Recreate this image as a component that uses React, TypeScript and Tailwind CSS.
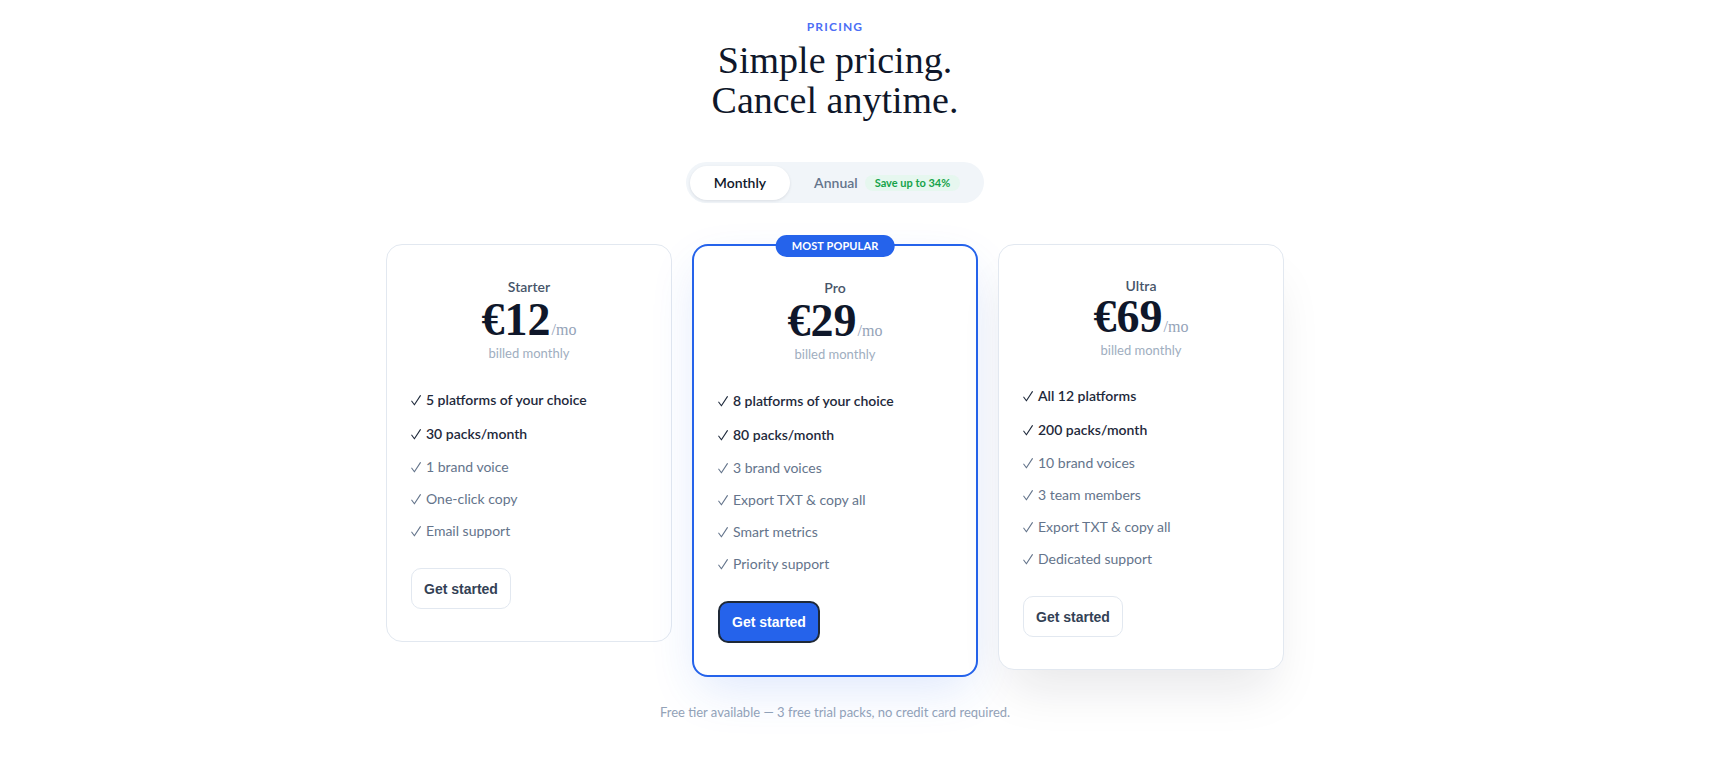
type Feature = { text: string; strong?: boolean };

interface Plan {
  name: string;
  price: string;
  features: Feature[];
  popular?: boolean;
}

const plans: Plan[] = [
  {
    name: 'Starter',
    price: '€12',
    features: [
      { text: '5 platforms of your choice', strong: true },
      { text: '30 packs/month', strong: true },
      { text: '1 brand voice' },
      { text: 'One-click copy' },
      { text: 'Email support' },
    ],
  },
  {
    name: 'Pro',
    price: '€29',
    popular: true,
    features: [
      { text: '8 platforms of your choice', strong: true },
      { text: '80 packs/month', strong: true },
      { text: '3 brand voices' },
      { text: 'Export TXT & copy all' },
      { text: 'Smart metrics' },
      { text: 'Priority support' },
    ],
  },
  {
    name: 'Ultra',
    price: '€69',
    features: [
      { text: 'All 12 platforms', strong: true },
      { text: '200 packs/month', strong: true },
      { text: '10 brand voices' },
      { text: '3 team members' },
      { text: 'Export TXT & copy all' },
      { text: 'Dedicated support' },
    ],
  },
];

function Check() {
  return (
    <svg viewBox="0 0 10 11" className="mr-[5px] inline-block h-[11px] w-[10px] align-[-1px]" fill="none">
      <path d="M0.8 6.2 L3.4 9.8 L9.4 0.6" stroke="currentColor" strokeWidth="1.1" strokeLinecap="round" strokeLinejoin="round" />
    </svg>
  );
}

function PlanCard({ plan }: { plan: Plan }) {
  const isUltra = plan.name === 'Ultra';
  const cardClass = plan.popular
    ? 'relative w-[286px] rounded-2xl border-2 border-[#2563eb] bg-white px-6 pt-8 pb-8 shadow-[0_18px_50px_-8px_rgba(37,99,235,0.16)]'
    : isUltra
      ? 'relative w-[286px] rounded-2xl border border-[#e2e8f0] bg-white px-6 pt-8 pb-8 shadow-[0_30px_50px_-12px_rgba(15,23,42,0.10)]'
      : 'relative w-[286px] rounded-2xl border border-[#e2e8f0] bg-white px-6 pt-8 pb-8';

  return (
    <div className={cardClass}>
      {plan.popular && (
        <div className="absolute -top-[11px] left-1/2 -translate-x-1/2 flex h-[22px] items-center rounded-full bg-[#2563eb] px-4 text-[11px] font-bold tracking-[0.01em] text-white">
          MOST POPULAR
        </div>
      )}

      {/* Header */}
      <div className="flex flex-col items-center">
        <div className={isUltra ? 'text-sm leading-[18px] font-semibold text-[#475569]' : 'text-sm leading-5 font-semibold text-[#475569]'}>
          {plan.name}
        </div>
        <div className={isUltra ? '-mt-px flex items-baseline' : 'flex items-baseline'}>
          <span className="font-['Liberation_Serif',serif] text-[46px] leading-none font-bold text-[#0f172a]">
            {plan.price}
          </span>
          <span className="ml-px font-['Liberation_Serif',serif] text-base text-[#94a3b8]">/mo</span>
        </div>
        <div className="text-[13px] leading-5 text-[#a0aec0]">billed monthly</div>
      </div>

      {/* Features */}
      <ul className={isUltra ? 'mt-[25px] flex flex-col gap-3' : 'mt-[26px] flex flex-col gap-3'}>
        {plan.features.map((f) => (
          <li
            key={f.text}
            className={
              f.strong
                ? 'text-sm leading-[22px] font-semibold text-[#1e293b]'
                : 'text-sm leading-5 text-[#64748b]'
            }
          >
            <Check />
            {f.text}
          </li>
        ))}
      </ul>

      {plan.popular ? (
        <button className="mt-[27px] h-[42px] rounded-[10px] border-2 border-[#1f2937] bg-[#2563eb] px-3 font-['Liberation_Sans',Arial,sans-serif] text-sm font-bold text-white">
          Get started
        </button>
      ) : (
        <button className="mt-[27px] h-[41px] rounded-[10px] border border-[#e2e8f0] bg-white px-3 font-['Liberation_Sans',Arial,sans-serif] text-sm font-bold text-[#334155]">
          Get started
        </button>
      )}
    </div>
  );
}

export default function App() {
  return (
    <div className="min-h-screen bg-white font-['Lato','Noto_Sans',sans-serif]">
      <div className="flex flex-col items-center pr-[50px] pt-[19px]">
        <div className="text-xs leading-4 font-bold tracking-[0.1em] text-[#4c6ef5]">PRICING</div>
        <h1 className="mt-[5px] text-center font-['Liberation_Serif',serif] text-[38px] leading-[40px] font-normal text-[#0f172a]">
          Simple pricing.
          <br />
          Cancel anytime.
        </h1>

        {/* Billing toggle */}
        <div className="mt-[42px] flex h-[41px] items-center rounded-full bg-[#f1f5f9] p-1">
          <button className="h-[34px] rounded-full bg-white px-6 text-sm font-semibold text-[#0f172a] shadow-[0_1px_3px_rgba(15,23,42,0.10)]">
            Monthly
          </button>
          <button className="flex h-[34px] items-center gap-[7px] pr-5 pl-6 text-sm font-semibold text-[#64748b]">
            Annual
            <span className="flex h-4 items-center rounded-full bg-[#e6f7ef] px-2.5 text-[11px] font-bold text-[#16a34a]">
              Save up to 34%
            </span>
          </button>
        </div>

        {/* Plans */}
        <div className="mt-[41px] flex items-start gap-5">
          {plans.map((p) => (
            <PlanCard key={p.name} plan={p} />
          ))}
        </div>

        <p className="mt-[25px] text-[13px] leading-5 text-[#94a3b8]">
          Free tier available — 3 free trial packs, no credit card required.
        </p>
      </div>
    </div>
  );
}
